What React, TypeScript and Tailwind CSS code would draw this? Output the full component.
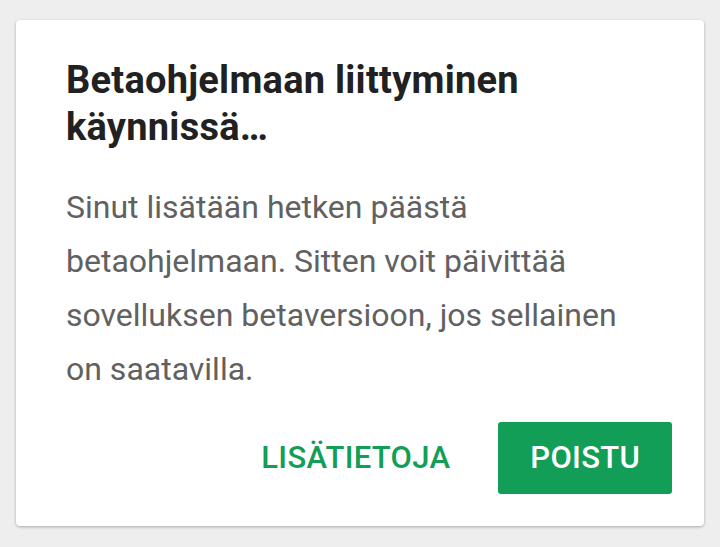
import React from 'react'

export default function App() {
  return (
    <div
      className="w-[720px] h-[547px] bg-[#eeeeee] pt-[20px] pl-[16px]"
      style={{ fontFamily: 'Roboto, "Noto Sans", sans-serif' }}
    >
      <div className="w-[688px] h-[506px] bg-white rounded-[4px] shadow-[0_1px_3px_rgba(0,0,0,0.3)] pt-[37px] pl-[50px] pr-[32px] pb-[32px] flex flex-col">
        <h1 className="text-[38px] leading-[47px] tracking-[0.25px] font-bold text-[#212121]">
          Betaohjelmaan liittyminen
          <br />
          käynnissä…
        </h1>
        <p className="mt-[29px] text-[32px] leading-[54px] text-[#616161] pr-[36px]">
          Sinut lisätään hetken päästä betaohjelmaan. Sitten voit päivittää sovelluksen betaversioon, jos sellainen on saatavilla.
        </p>
        <div className="mt-auto flex justify-end items-center gap-[16px]">
          <button className="h-[72px] px-[32px] text-[31px] tracking-[0.3px] font-medium text-[#129e57] rounded-[3px]">
            LISÄTIETOJA
          </button>
          <button className="h-[72px] px-[32px] text-[31px] tracking-[0.3px] font-medium text-white bg-[#129e57] rounded-[3px]">
            POISTU
          </button>
        </div>
      </div>
    </div>
  )
}
